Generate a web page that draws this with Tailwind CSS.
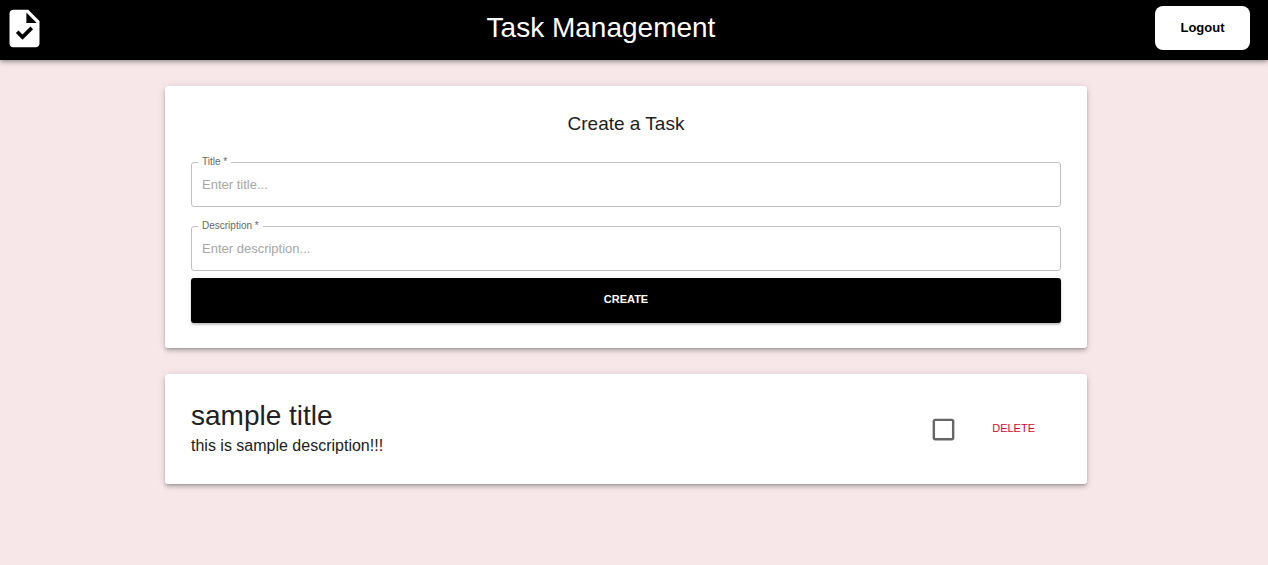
<!DOCTYPE html>
<html lang="en">
<head>
<meta charset="utf-8">
<meta name="viewport" content="width=device-width, initial-scale=1">
<title>Task Management</title>
<script src="https://cdn.jsdelivr.net/npm/@tailwindcss/browser@4"></script>
</head>
<body class="min-h-screen bg-[#f7e7e8] font-['Liberation_Sans',Arial,sans-serif] text-[#212121]">
  <header class="flex h-[60px] items-center justify-between bg-black pb-[4px] pl-[2px] pr-[18px] text-white shadow-[0_2px_3px_-1px_rgba(0,0,0,0.2),0_3px_4px_0_rgba(0,0,0,0.14),0_1px_8px_0_rgba(0,0,0,0.12)]">
    <svg class="size-[45px]" viewBox="0 0 24 24" fill="currentColor" aria-hidden="true"><path d="M14 2H6c-1.100 0-1.990.9-1.990 2L4 20c0 1.100.89 2 1.990 2H18c1.100 0 2-.9 2-2V8l-6-6zm-3.060 16L7.400 14.460l1.410-1.410 2.120 2.120 4.240-4.240 1.410 1.410L10.940 18zM13 9V3.500L18.500 9H13z" stroke-linejoin="round"/></svg>
    <h1 class="text-[28px] leading-8">Task Management</h1>
    <button type="button" class="h-11 w-[95px] rounded-lg bg-white text-[13px] font-bold text-black">Logout</button>
  </header>

  <main class="flex flex-col gap-[26px] py-[26px] pr-4">
    <form class="mx-auto w-full max-w-[922px] rounded-[3px] bg-white px-[26px] py-[25px] shadow-[0_2px_3px_-1px_rgba(0,0,0,0.2),0_3px_4px_0_rgba(0,0,0,0.14),0_1px_8px_0_rgba(0,0,0,0.12)]">
      <h2 class="mb-[25px] text-center text-[19px] leading-[26px]">Create a Task</h2>
      <div class="relative mb-[19px]">
        <label for="title" class="absolute left-[7px] top-[-6px] bg-white px-1 text-[10px] leading-3 text-[#666]">Title *</label>
        <input id="title" type="text" required placeholder="Enter title..." class="block h-[45px] w-full rounded-[3px] border border-[#c0c0c0] px-[10px] text-[13px] placeholder:text-[#a6a6a6]">
      </div>
      <div class="relative mb-[7px]">
        <label for="description" class="absolute left-[7px] top-[-6px] bg-white px-1 text-[10px] leading-3 text-[#666]">Description *</label>
        <input id="description" type="text" required placeholder="Enter description..." class="block h-[45px] w-full rounded-[3px] border border-[#c0c0c0] px-[10px] text-[13px] placeholder:text-[#a6a6a6]">
      </div>
      <button type="submit" class="block h-[45px] w-full rounded-[3px] bg-black pb-[2px] text-[11px] font-bold text-white shadow-[0_2px_2px_-2px_rgba(0,0,0,0.2),0_2px_2px_0_rgba(0,0,0,0.14),0_1px_4px_0_rgba(0,0,0,0.12)]">CREATE</button>
    </form>

    <article class="mx-auto flex w-full max-w-[922px] items-center justify-between rounded-[3px] bg-white px-[26px] py-[25px] shadow-[0_2px_3px_-1px_rgba(0,0,0,0.2),0_3px_4px_0_rgba(0,0,0,0.14),0_1px_8px_0_rgba(0,0,0,0.12)]">
      <div>
        <h3 class="text-[28px] leading-[34px]">sample title</h3>
        <p class="text-[16px] leading-[26px]">this is sample description!!!</p>
      </div>
      <div class="flex items-center gap-[34px] pr-[26px]">
        <label class="relative size-[29px] text-[#666]">
          <input type="checkbox" aria-label="Mark sample title as done" class="peer absolute inset-0 size-full cursor-pointer opacity-0">
          <svg class="size-full peer-checked:text-black" viewBox="0 0 24 24" fill="currentColor" aria-hidden="true"><path d="M19 5v14H5V5h14m0-2H5c-1.100 0-2 .9-2 2v14c0 1.100.9 2 2 2h14c1.100 0 2-.9 2-2V5c0-1.100-.9-2-2-2z"/></svg>
        </label>
        <button type="button" class="pb-[2px] text-[11px] leading-5 text-[#dc0032]">DELETE</button>
      </div>
    </article>
  </main>
</body>
</html>
